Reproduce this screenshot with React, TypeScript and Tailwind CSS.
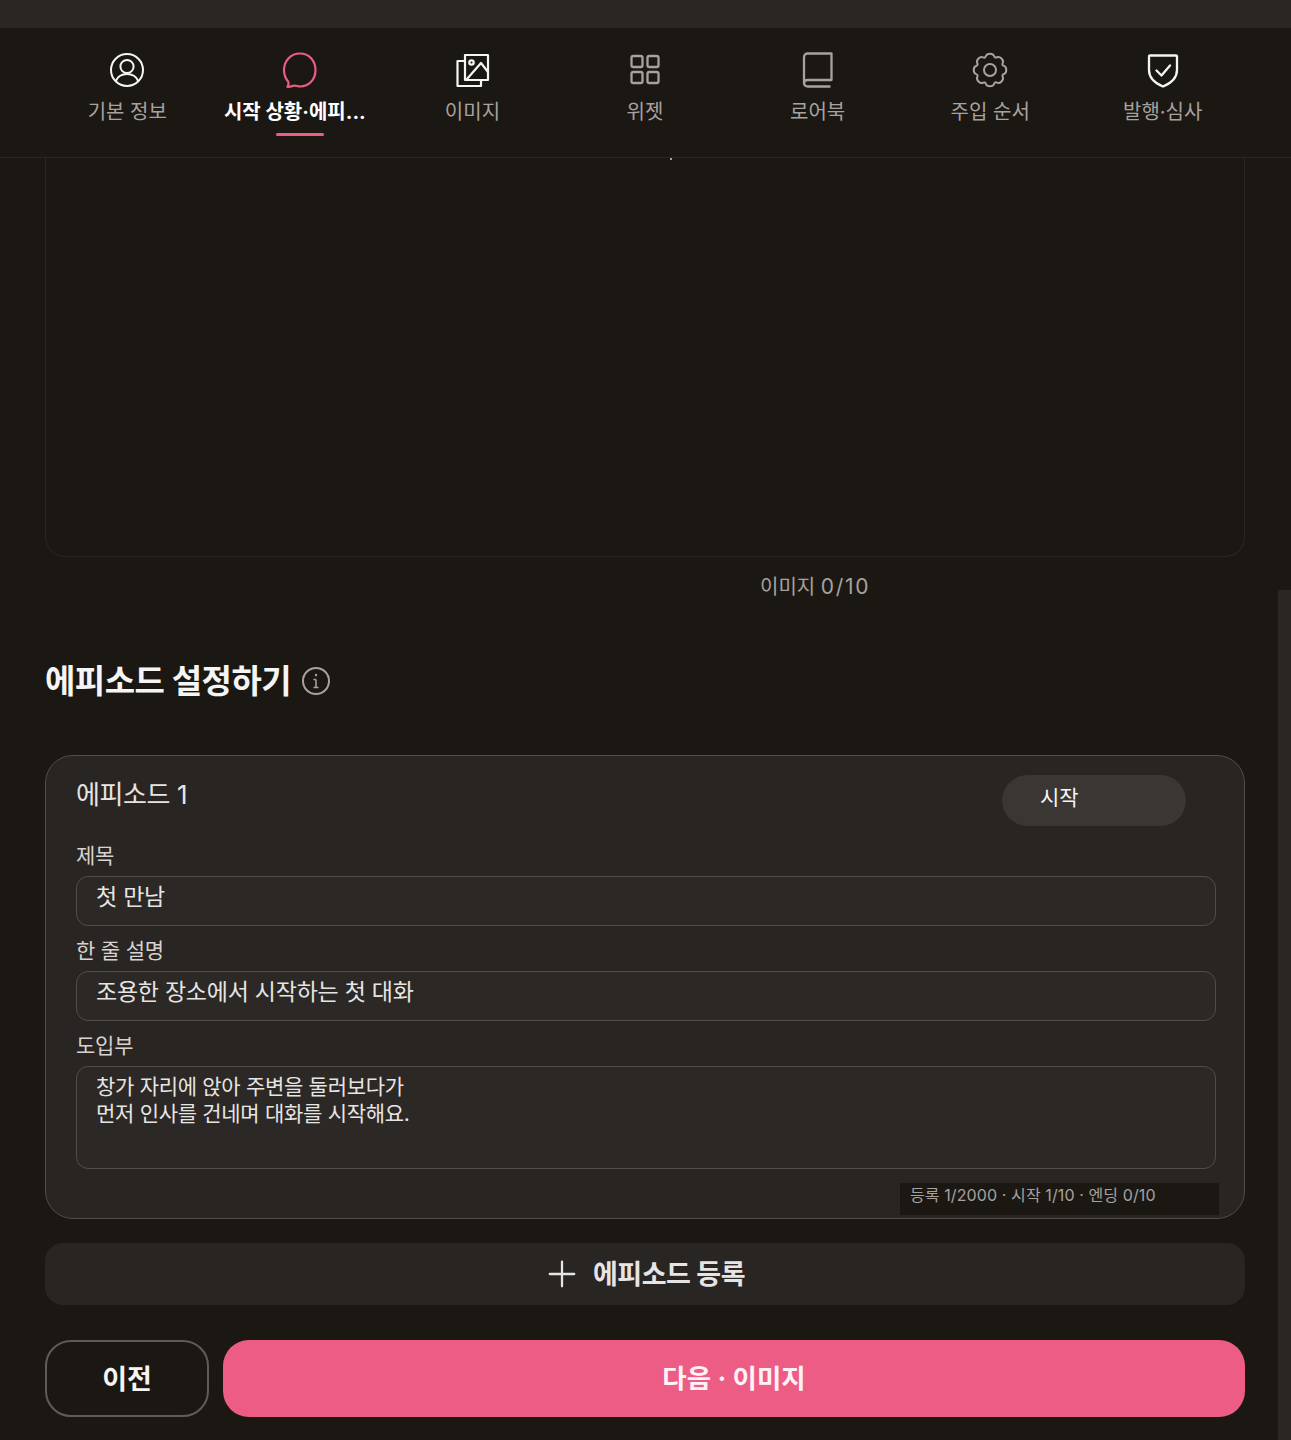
import { Plus } from 'lucide-react';

const tabs = [
  { label: '기본 정보', icon: 'user', tone: 'white' },
  { label: '시작 상황·에피...', icon: 'chat', tone: 'pink', active: true },
  { label: '이미지', icon: 'images', tone: 'white' },
  { label: '위젯', icon: 'grid', tone: 'gray' },
  { label: '로어북', icon: 'book', tone: 'gray' },
  { label: '주입 순서', icon: 'gear', tone: 'gray' },
  { label: '발행·심사', icon: 'shield', tone: 'white' },
];

// 8 lobes, corners smoothed through the midpoints
function gearPath() {
  const pts: [number, number][] = [];
  for (let i = 0; i < 8; i++) {
    const a = (i * Math.PI) / 4 - Math.PI / 2;
    for (const [da, r] of [[-0.2, 16.6], [0.2, 16.6], [0.39, 12.6]] as const) {
      pts.push([18 + r * Math.cos(a + da), 18 + r * Math.sin(a + da)]);
    }
  }
  const mid = (p: [number, number], q: [number, number]) => `${((p[0] + q[0]) / 2).toFixed(2)} ${((p[1] + q[1]) / 2).toFixed(2)}`;
  let d = `M${mid(pts[pts.length - 1], pts[0])}`;
  pts.forEach((p, i) => {
    d += `Q${p[0].toFixed(2)} ${p[1].toFixed(2)} ${mid(p, pts[(i + 1) % pts.length])}`;
  });
  return d + 'Z';
}

function TabIcon({ name }: { name: string }) {
  if (name === 'user')
    return (
      <svg viewBox="0 0 36 36" className="h-9 w-9" fill="none" stroke="currentColor" strokeWidth="2">
        <circle cx="18" cy="18" r="16" />
        <circle cx="18" cy="14.500" r="6.600" />
        <path d="M6.800 29c2-4.600 6.200-7 11.200-7s9.200 2.400 11.200 7" />
      </svg>
    );
  if (name === 'chat')
    return (
      <svg viewBox="0 0 36 36" className="h-9 w-9" fill="none" stroke="currentColor" strokeWidth="2.200" strokeLinejoin="round">
        <path d="M18 1.500c9 0 15.500 7 15.500 16.500S27 34.500 18 34.500c-2.500 0-4.500-1.400-6.500-.8-2 .6-4 1.300-6 1.100 1-1.800 1.300-3.800.6-5.300C3.500 26.500 2 22.500 2 18 2 8.500 9 1.500 18 1.500Z" />
      </svg>
    );
  if (name === 'images')
    return (
      <svg viewBox="0 0 36 36" className="h-9 w-9" fill="none" stroke="currentColor" strokeWidth="2.200" strokeLinejoin="round" strokeLinecap="round">
        <path d="M11 3h23v25H11z" />
        <path d="M11 9H3.500v25H27v-6" />
        <circle cx="17.500" cy="10.500" r="2.200" />
        <path d="M13 27l14-16 7 9" />
      </svg>
    );
  if (name === 'grid')
    return (
      <svg viewBox="0 0 36 36" className="h-9 w-9" fill="none" stroke="currentColor" strokeWidth="2.300">
        <rect x="4.500" y="4" width="11" height="11" rx="1.800" />
        <rect x="20.500" y="4" width="11" height="11" rx="1.800" />
        <rect x="4.500" y="20" width="11" height="11" rx="1.800" />
        <rect x="20.500" y="20" width="11" height="11" rx="1.800" />
      </svg>
    );
  if (name === 'book')
    return (
      <svg viewBox="0 0 36 36" className="h-9 w-9" fill="none" stroke="currentColor" strokeWidth="2.300" strokeLinejoin="round">
        <path d="M7.500 1.500h24V28H7.500a3.500 3.500 0 0 0-3.500 3V5a3.500 3.500 0 0 1 3.500-3.500Z" />
        <path d="M4 30.500c0 2.500 1.500 4 4 4h22.500" />
      </svg>
    );
  if (name === 'gear')
    return (
      <svg viewBox="0 0 36 36" className="h-9 w-9" fill="none" stroke="currentColor" strokeWidth="2" strokeLinejoin="round">
        <path d={gearPath()} />
        <circle cx="18" cy="18" r="6" />
      </svg>
    );
  return (
    <svg viewBox="0 0 36 36" className="h-9 w-9" fill="none" stroke="currentColor" strokeWidth="2.300" strokeLinejoin="round" strokeLinecap="round">
      <path d="M5 3.500h26a1 1 0 0 1 1 1V18c0 7.500-5.500 13-14 16.500C9.500 31 4 25.500 4 18V4.500a1 1 0 0 1 1-1Z" />
      <path d="M11.500 18.500l5 5 8.500-10" />
    </svg>
  );
}

function Field({ label, children }: { label: string; children: React.ReactNode }) {
  return (
    <div>
      <div className="h-[26px] pt-[1px] text-[21px] leading-[26px] tracking-[-0.2px] text-[#d6d3d1]">{label}</div>
      {children}
    </div>
  );
}

export default function App() {
  return (
    <div className="flex h-[1440px] w-full flex-col overflow-hidden bg-[#1b1814] font-['Inter','Noto_Sans_CJK_KR',sans-serif] text-white">
      <div className="h-7 bg-[#2a2623]" />

      <nav className="flex h-[130px] border-b border-[#2a2623] pl-[41px] pr-[42px]">
        {tabs.map((t) => (
          <div key={t.label} className="flex flex-1 flex-col items-center pt-6">
            <span className={t.tone === 'pink' ? 'text-[#ee5c86]' : t.tone === 'white' ? 'text-[#f5f5f4]' : 'text-[#a8a29e]'}>
              <TabIcon name={t.icon} />
            </span>
            <span className={`mt-[9px] h-[30px] whitespace-nowrap text-[20px] leading-[30px] ${t.active ? 'pr-[10px] font-bold text-white' : 'text-[#a8a29e]'}`}>
              {t.label}
            </span>
            {t.active && <span className="mt-[6px] h-[3px] w-[48px] rounded-full bg-[#ee5c86]" />}
          </div>
        ))}
      </nav>

      <div className="flex min-h-0 flex-1">
        <main className="min-w-0 flex-1 pl-[45px] pr-[33px]">
          <div className="relative h-[399px] rounded-b-[20px] border border-t-0 border-[#2a2623]">
            <span className="absolute left-[624px] top-0 h-[2px] w-[2px] bg-[#a8a29e]" />
          </div>
          <div className="mt-[17px] h-[25px] pl-[715px] text-[20px] leading-[26px] text-[#a8a29e]">
            이미지 <span className="text-[21px] tracking-[1.700px]">0/10</span>
          </div>

          <div className="mt-[58px] flex h-[48px] items-center gap-[10px]">
            <h2 className="text-[33px] font-bold leading-[50px] tracking-[-0.5px] text-[#f5f5f4]">에피소드 설정하기</h2>
            <svg viewBox="0 0 30 30" className="h-[30px] w-[30px] text-[#a8a29e]" fill="none" stroke="currentColor" strokeWidth="2">
              <circle cx="15" cy="15" r="13" />
              <path d="M15 13.500v8M12.500 13.500H15M12.500 21.500h5" strokeWidth="1.600" />
              <circle cx="15" cy="9" r="1.200" fill="currentColor" stroke="none" />
            </svg>
          </div>

          <section className="mt-[50px] h-[464px] rounded-[28px] border border-[#514e4a] bg-[#292522] pl-[30px] pr-[28px] pt-[19px]">
            <div className="flex h-[51px] justify-between pr-[30px]">
              <div className="text-[26px] leading-[40px] tracking-[-0.4px] text-[#e7e5e4]">에피소드 1</div>
              <div className="h-[51px] w-[184px] rounded-full bg-[#3a3633] pl-[38px] text-[21px] leading-[46px] text-[#f5f5f4]">시작</div>
            </div>

            <div className="mt-[16px] flex flex-col gap-[11px]">
              <Field label="제목">
                <div className="mt-[8px] h-[50px] rounded-[12px] border border-[#514e4a] bg-[#2b2825] px-[19px] text-[23px] leading-[40px] tracking-[-0.25px] text-[#e7e5e4]">첫 만남</div>
              </Field>
              <Field label="한 줄 설명">
                <div className="mt-[8px] h-[50px] rounded-[12px] border border-[#514e4a] bg-[#2b2825] px-[19px] text-[23px] leading-[40px] tracking-[-0.25px] text-[#e7e5e4]">조용한 장소에서 시작하는 첫 대화</div>
              </Field>
              <Field label="도입부">
                <div className="mt-[8px] h-[103px] rounded-[12px] border border-[#514e4a] bg-[#2b2825] px-[19px] pt-[6px] text-[21px] leading-[27px] tracking-[-0.3px] text-[#e7e5e4]">
                  창가 자리에 앉아 주변을 둘러보다가
                  <br />
                  먼저 인사를 건네며 대화를 시작해요.
                </div>
              </Field>
            </div>

            <div className="-mr-[3px] mt-[14px] ml-auto h-[32px] w-[319px] bg-[#1b1814] pl-[10px] text-[16px] leading-[24px] tracking-[0.1px] text-[#a8a29e]">
              등록 1/2000 · 시작 1/10 · 엔딩 0/10
            </div>
          </section>

          <button className="mt-[24px] flex h-[62px] w-full items-center justify-center gap-[10px] rounded-[18px] bg-[#292522] pr-[4px] text-[27px] font-bold tracking-[-0.5px] text-[#e7e5e4]">
            <Plus size={42} strokeWidth={1.3} />
            <span className="pt-[2px]">에피소드 등록</span>
          </button>

          <div className="mt-[35px] flex h-[77px] gap-[14px]">
            <button className="w-[164px] rounded-[26px] border-2 border-[#5e5b58] pt-[3px] text-[27px] font-bold text-[#f5f5f4]">이전</button>
            <button className="flex-1 rounded-[26px] bg-[#ed5c85] text-[26.500px] font-bold text-[#fdf2f5]">다음 · 이미지</button>
          </div>
        </main>

        <aside className="flex w-[13px] flex-col">
          <div className="h-[432px]" />
          <div className="flex-1 bg-[#2a2623]" />
        </aside>
      </div>
    </div>
  );
}
